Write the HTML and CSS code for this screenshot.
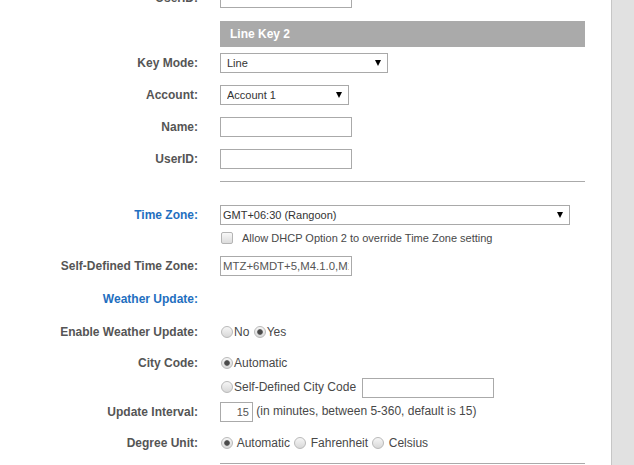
FILE: index.html
```html
<!DOCTYPE html>
<html>
<head>
    <meta charset="UTF-8">
    <meta name="viewport" content="width=device-width, initial-scale=1.0">
    <title>Line Key / Time / Weather</title>
    <link rel="stylesheet" href="styles.css">
</head>
<body>
    <div class="page">
        <div class="main">
            <div class="form">
                <div class="row">
                    <label class="lbl">UserID:</label>
                    <div class="val"><input type="text" class="txt"></div>
                </div>

                <div class="section-head">Line Key 2</div>
                <div class="row">
                    <label class="lbl">Key Mode:</label>
                    <div class="val"><span class="sel"><select class="sel-mode"><option>Line</option></select></span></div>
                </div>
                <div class="row">
                    <label class="lbl">Account:</label>
                    <div class="val"><span class="sel"><select class="sel-account"><option>Account 1</option></select></span></div>
                </div>
                <div class="row">
                    <label class="lbl">Name:</label>
                    <div class="val"><input type="text" class="txt"></div>
                </div>
                <div class="row">
                    <label class="lbl">UserID:</label>
                    <div class="val"><input type="text" class="txt"></div>
                </div>
                <div class="divider"></div>

                <!-- 시간대 -->
                <div class="row row-tz">
                    <label class="lbl blue">Time Zone:</label>
                    <div class="val"><span class="sel"><select class="sel-tz"><option>GMT+06:30 (Rangoon)</option></select></span></div>
                </div>
                <div class="row row-check">
                    <label class="lbl"></label>
                    <div class="val small"><input type="checkbox" class="chk">Allow DHCP Option 2 to override Time Zone setting</div>
                </div>
                <div class="row">
                    <label class="lbl">Self-Defined Time Zone:</label>
                    <div class="val"><input type="text" class="txt txt-tz" value="MTZ+6MDT+5,M4.1.0,M10.5.0/3"></div>
                </div>

                <!-- 날씨 -->
                <div class="row row-weather">
                    <label class="lbl blue">Weather Update:</label>
                </div>
                <div class="row">
                    <label class="lbl">Enable Weather Update:</label>
                    <div class="val"><input type="radio" name="wu">No <input type="radio" name="wu" checked>Yes</div>
                </div>
                <div class="row row-city">
                    <label class="lbl">City Code:</label>
                    <div class="val"><input type="radio" name="city" checked>Automatic</div>
                </div>
                <div class="row row-city2">
                    <label class="lbl"></label>
                    <div class="val"><input type="radio" name="city">Self-Defined City Code <input type="text" class="txt txt-city"></div>
                </div>
                <div class="row row-interval">
                    <label class="lbl">Update Interval:</label>
                    <div class="val"><input type="text" class="txt txt-num" value="15"> (in minutes, between 5-360, default is 15)</div>
                </div>
                <div class="row row-degree">
                    <label class="lbl">Degree Unit:</label>
                    <div class="val"><input type="radio" name="deg" checked> Automatic <input type="radio" name="deg"> Fahrenheit <input type="radio" name="deg"> Celsius</div>
                </div>
                <div class="divider divider-end"></div>
            </div>
        </div>
        <div class="side"></div>
    </div>
</body>
</html>
```

FILE: styles.css
```css
* { box-sizing: border-box; }
html, body { margin: 0; height: 100%; }
body {
    font-family: "Liberation Sans", Arial, sans-serif;
    font-size: 12px;
    color: #484848;
    background: #fff;
    overflow: hidden;
}
.page { display: flex; height: 465px; }
.main { flex: 0 0 611px; overflow: hidden; background: #fff; }
.side { flex: 1; background: #e1e1e1; border-left: 1px solid #c6c6c6; }

.form { width: 585px; margin-top: -18px; }
.row { display: flex; align-items: center; height: 32px; }
.lbl {
    flex: 0 0 220px;
    padding-right: 22px;
    text-align: right;
    font-weight: bold;
    color: #555;
}
.lbl.blue { color: #1f6fc0; }
.val { white-space: nowrap; }
.val.small { font-size: 11px; }

.section-head {
    margin: 7px 0 0 220px;
    height: 26px; line-height: 26px;
    padding-left: 10px;
    background: #aaa;
    color: #fff;
    font-weight: bold;
}
.divider { margin: 6px 0 0 220px; border-top: 1px solid #aaa; }
.divider-end { margin-top: 3px; }

/* row heights */
.row-tz { margin-top: 23px; height: 20px; }
.row-check { height: 25px; }
.row-weather { height: 34px; }
.row-city { height: 30px; }
.row-city2 { height: 20px; }
.row-interval { height: 27px; }
.row-degree { height: 35px; }

/* inputs */
.txt {
    width: 132px; height: 20px;
    border: 1px solid #aaa;
    padding: 0 2px;
    font: 12px "Liberation Sans", Arial, sans-serif;
    color: #555;
    vertical-align: middle;
    outline: none;
}
.txt-tz { font-size: 11.4px; }
.txt-city { margin-left: 3px; }
.txt-num { width: 33px; text-align: right; padding-right: 3px; font-size: 11px; }

.sel { position: relative; display: inline-block; vertical-align: middle; }
.sel::after {
    content: "";
    position: absolute;
    right: 7px; top: 7px;
    border-left: 3px solid transparent;
    border-right: 3px solid transparent;
    border-top: 6px solid #000;
}
.sel select {
    -webkit-appearance: none; appearance: none;
    display: block;
    height: 20px;
    border: 1px solid #a9a9a9;
    border-radius: 0;
    background: #fff;
    padding: 0 0 0 6px;
    font: 11px "Liberation Sans", Arial, sans-serif;
    color: #333;
    outline: none;
}
.sel-mode { width: 168px; }
.sel-account { width: 129px; }
.sel-tz { width: 350px; padding-left: 2px !important; }

input[type=radio] {
    -webkit-appearance: none; appearance: none;
    width: 12px; height: 12px;
    margin: 0 1px;
    border: 1px solid #b9b9b9;
    border-radius: 50%;
    background: linear-gradient(#f6f6f6, #d8d8d8);
    vertical-align: -2px;
}
input[type=radio]:checked {
    background: radial-gradient(circle, #4a4a4a 0 2px, #777 2.6px, transparent 3.2px), linear-gradient(#f6f6f6, #d8d8d8);
}
.chk {
    -webkit-appearance: none; appearance: none;
    width: 12px; height: 12px;
    margin: 0 9px 0 1px;
    border: 1px solid #b4b4b4;
    border-radius: 2px;
    background: linear-gradient(#f8f8f8, #dcdcdc);
    vertical-align: -2px;
}
```
